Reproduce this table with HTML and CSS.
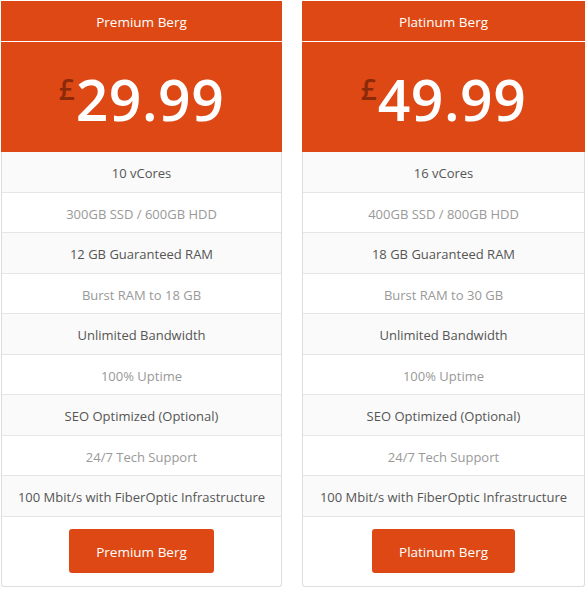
FILE: index.html
```html
<!DOCTYPE html>
<html>
<head>
<meta charset="utf-8">
<link rel="stylesheet" href="styles.css">
</head>
<body>
<div class="plans">
  <div class="plan">
    <div class="plan-name">Premium Berg</div>
    <div class="plan-price"><span class="cur">£</span>29.99</div>
    <ul class="features">
      <li>10 vCores</li>
      <li>300GB SSD / 600GB HDD</li>
      <li>12 GB Guaranteed RAM</li>
      <li>Burst RAM to 18 GB</li>
      <li>Unlimited Bandwidth</li>
      <li>100% Uptime</li>
      <li>SEO Optimized (Optional)</li>
      <li>24/7 Tech Support</li>
      <li>100 Mbit/s with FiberOptic Infrastructure</li>
    </ul>
    <div class="plan-foot"><a class="btn">Premium Berg</a></div>
  </div>
  <div class="plan">
    <div class="plan-name">Platinum Berg</div>
    <div class="plan-price"><span class="cur">£</span>49.99</div>
    <ul class="features">
      <li>16 vCores</li>
      <li>400GB SSD / 800GB HDD</li>
      <li>18 GB Guaranteed RAM</li>
      <li>Burst RAM to 30 GB</li>
      <li>Unlimited Bandwidth</li>
      <li>100% Uptime</li>
      <li>SEO Optimized (Optional)</li>
      <li>24/7 Tech Support</li>
      <li>100 Mbit/s with FiberOptic Infrastructure</li>
    </ul>
    <div class="plan-foot"><a class="btn">Platinum Berg</a></div>
  </div>
</div>
</body>
</html>
```
FILE: styles.css
```css
html, body {
  margin: 0;
  padding: 0;
  background: #fff;
}
body {
  font-family: "Open Sans", "Noto Sans", sans-serif;
  font-size: 13px;
  color: #555;
}
.plans {
  display: grid;
  grid-template-columns: 281px 283px;
  column-gap: 20px;
  padding: 1px 0 0 1px;
}
.plan {
  border: 1px solid #ddd;
  border-top: 0;
  border-radius: 0 0 3px 3px;
  background: #fff;
  text-align: center;
}
.plan-name {
  background: #dd4814;
  color: #fff;
  height: 40px;
  line-height: 42px;
  font-size: 13.5px;
  border-bottom: 1px solid #fff;
  margin: 0 -1px;
}
.plan-price {
  background: #dd4814;
  color: #fff;
  height: 106px;
  padding-top: 4px;
  margin: 0 -1px;
  display: flex;
  justify-content: center;
  align-items: center;
  font-size: 57px;
  font-weight: 600;
  letter-spacing: 0.5px;
  line-height: 1;
}
.cur {
  font-size: 28px;
  color: #8a2a0a;
  margin-top: -20px;
  margin-right: 1px;
  font-weight: 600;
  letter-spacing: 0;
}
.features {
  list-style: none;
  margin: 0;
  padding: 0;
}
.features li {
  height: 37.5px;
  padding-top: 2px;
  line-height: 39.5px;
  border-bottom: 1px solid #e6e6e6;
  white-space: nowrap;
}
.features li:nth-child(odd) {
  background: #fafafa;
  color: #555;
}
.features li:nth-child(even) {
  background: #fff;
  color: #999;
}
.plan-foot {
  height: 69px;
  display: flex;
  align-items: center;
  justify-content: center;
}
.btn {
  display: inline-block;
  background: #dd4814;
  color: #fff;
  border-radius: 3px;
  height: 44px;
  line-height: 46px;
  padding: 0 27px;
  font-size: 13.5px;
}
```
